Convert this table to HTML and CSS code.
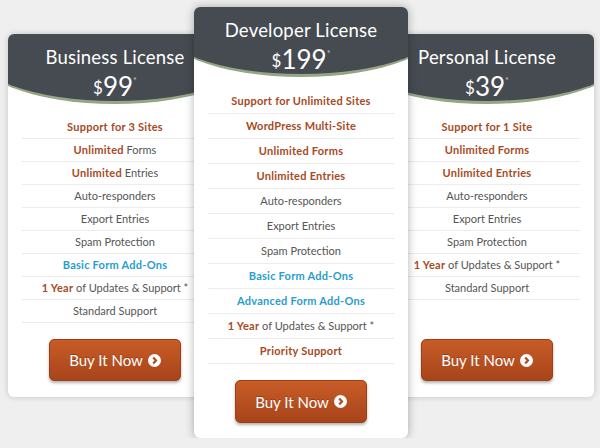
FILE: index.html
```html
<!DOCTYPE html>
<html>
<head>
<meta charset="utf-8">
<link rel="stylesheet" href="styles.css">
</head>
<body>
<div class="plans">
  <div class="card side">
    <div class="head">
      <div class="title">Business License</div>
      <div class="price"><span class="cur">$</span>99<span class="ast">*</span></div>
    </div>
    <ul class="feats">
      <li><b>Support for 3 Sites</b></li>
      <li><b>Unlimited</b> Forms</li>
      <li><b>Unlimited</b> Entries</li>
      <li>Auto-responders</li>
      <li>Export Entries</li>
      <li>Spam Protection</li>
      <li><b class="blue">Basic Form Add-Ons</b></li>
      <li><b>1 Year</b> of Updates &amp; Support *</li>
      <li>Standard Support</li>
    </ul>
    <a class="btn" href="#">Buy It Now <svg class="ico" width="13" height="13" viewBox="0 0 13 13"><circle cx="6.5" cy="6.5" r="6.5" fill="#fff"/><path d="M5.2 3.6 L8 6.5 L5.2 9.4" fill="none" stroke="#b24a1d" stroke-width="2.2"/></svg></a>
  </div>
  <div class="card main">
    <div class="head">
      <div class="title">Developer License</div>
      <div class="price"><span class="cur">$</span>199<span class="ast">*</span></div>
    </div>
    <ul class="feats">
      <li><b>Support for Unlimited Sites</b></li>
      <li><b>WordPress Multi-Site</b></li>
      <li><b>Unlimited Forms</b></li>
      <li><b>Unlimited Entries</b></li>
      <li>Auto-responders</li>
      <li>Export Entries</li>
      <li>Spam Protection</li>
      <li><b class="blue">Basic Form Add-Ons</b></li>
      <li><b class="blue">Advanced Form Add-Ons</b></li>
      <li><b>1 Year</b> of Updates &amp; Support *</li>
      <li><b>Priority Support</b></li>
    </ul>
    <a class="btn" href="#">Buy It Now <svg class="ico" width="13" height="13" viewBox="0 0 13 13"><circle cx="6.5" cy="6.5" r="6.5" fill="#fff"/><path d="M5.2 3.6 L8 6.5 L5.2 9.4" fill="none" stroke="#b24a1d" stroke-width="2.2"/></svg></a>
  </div>
  <div class="card side">
    <div class="head">
      <div class="title">Personal License</div>
      <div class="price"><span class="cur">$</span>39<span class="ast">*</span></div>
    </div>
    <ul class="feats">
      <li><b>Support for 1 Site</b></li>
      <li><b>Unlimited Forms</b></li>
      <li><b>Unlimited Entries</b></li>
      <li>Auto-responders</li>
      <li>Export Entries</li>
      <li>Spam Protection</li>
      <li><b>1 Year</b> of Updates &amp; Support *</li>
      <li>Standard Support</li>
    </ul>
    <a class="btn" href="#">Buy It Now <svg class="ico" width="13" height="13" viewBox="0 0 13 13"><circle cx="6.5" cy="6.5" r="6.5" fill="#fff"/><path d="M5.2 3.6 L8 6.5 L5.2 9.4" fill="none" stroke="#b24a1d" stroke-width="2.2"/></svg></a>
  </div>
</div>
</body>
</html>
```
FILE: styles.css
```css
html, body {
  margin: 0;
  padding: 0;
  background: #efefef;
  font-family: "Lato", "Open Sans", sans-serif;
}
.plans {
  display: flex;
  align-items: flex-start;
  padding: 7px 0 0 8px;
}
.card {
  width: 214px;
  flex: none;
  display: flex;
  flex-direction: column;
  background: #fff;
  border-radius: 6px;
  overflow: hidden;
  box-shadow: 0 0 6px rgba(0, 0, 0, 0.18);
}
.card.side {
  margin-top: 27px;
  height: 363px;
}
.card.main {
  position: relative;
  z-index: 2;
  margin: 0 -28px;
  height: 431px;
  box-shadow: 0 0 10px rgba(0, 0, 0, 0.3);
}
.head {
  margin: 0 -40px;
  padding: 12px 40px 0;
  height: 55px;
  background: #464b51;
  color: #fff;
  text-align: center;
  border-bottom: 3px solid #94a685;
  border-radius: 0 0 50% 50% / 0 0 57px 57px;
}
.title {
  font-size: 18.5px;
  line-height: 22px;
  letter-spacing: 0.2px;
}
.price {
  font-size: 26px;
  line-height: 26px;
}
.price .cur {
  font-size: 17px;
  vertical-align: 2px;
}
.price .ast {
  font-size: 9px;
  vertical-align: 12px;
  color: #c8c8c8;
}
.feats {
  list-style: none;
  margin: 12px 0 0;
  padding: 0 14px;
}
.feats li {
  height: 22px;
  line-height: 22px;
  border-bottom: 1px solid #ececec;
  text-align: center;
  font-size: 11px;
  color: #555;
  white-space: nowrap;
}
.main .feats li {
  height: 24px;
  line-height: 24px;
}
.feats b {
  color: #a8491e;
  font-weight: 700;
  letter-spacing: 0.25px;
}
.feats b.blue {
  color: #2a9cd0;
}
.btn {
  margin: auto auto 16px;
  width: 132px;
  height: 42px;
  box-sizing: border-box;
  display: flex;
  align-items: center;
  justify-content: center;
  gap: 5px;
  border: 1px solid #9c3e16;
  border-radius: 5px;
  background: linear-gradient(#c85c27, #a7441a);
  box-shadow: 0 2px 3px rgba(0, 0, 0, 0.3);
  color: #fff;
  text-decoration: none;
  font-size: 15px;
  text-shadow: 0 -1px 0 rgba(0, 0, 0, 0.25);
}
.main .btn {
  height: 43px;
  margin-bottom: 15px;
}
.ico {
  display: block;
}
```
